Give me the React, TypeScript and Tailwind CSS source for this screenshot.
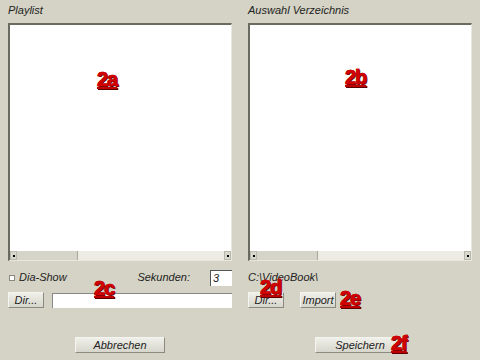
import React from "react";

const font = { fontFamily: '"Liberation Sans", Arial, sans-serif' };

function Tag({ t, className }: { t: string; className: string }) {
  return (
    <span
      className={`absolute text-[20px] leading-none font-bold underline decoration-2 underline-offset-[1px] text-[#d40000] tracking-[-1px] [-webkit-text-stroke:0.6px_#c00000] ${className}`}
      style={{ textShadow: "1px 1px 0 #5a0000", fontFamily: '"Liberation Sans", Arial, sans-serif' }}
    >
      {t}
    </span>
  );
}

function Btn({ children, className }: { children: React.ReactNode; className: string }) {
  return (
    <div
      className={`h-[16px] flex items-center justify-center border border-t-[#f4f4f0] border-l-[#f4f4f0] border-r-[#8a8a80] border-b-[#8a8a80] bg-gradient-to-b from-[#f0f0ea] to-[#d6d6cc] text-[11px] italic text-[#222] ${className}`}
    >
      {children}
    </div>
  );
}

function ListBox() {
  return (
    <div className="h-[238px] w-[224px] bg-white border-t-2 border-l-2 border-t-[#6a6a60] border-l-[#6a6a60] border-r border-b border-r-[#e8e8e0] border-b-[#e8e8e0] flex flex-col">
      <div className="flex-1" />
      <div className="h-[9px] flex items-stretch bg-[#ecece4]">
        <div className="w-[7px] bg-[#d8d8cc] border border-[#b8b8ac] flex items-center justify-center">
          <div className="w-[2px] h-[2px] bg-black" />
        </div>
        <div className="w-[61px] bg-[#d4d4c8] border-r border-[#a8a89c]" />
        <div className="flex-1" />
        <div className="w-[7px] bg-[#d8d8cc] border border-[#b8b8ac] flex items-center justify-center">
          <div className="w-[2px] h-[2px] bg-black" />
        </div>
      </div>
    </div>
  );
}

export default function App() {
  return (
    <div className="relative w-[480px] h-[360px] bg-[#d4d3c5] overflow-hidden" style={font}>
      <div className="flex gap-[16px] px-[8px] pt-[3px]">
        <div className="flex flex-col w-[224px]">
          <div className="h-[20px] text-[11px] italic text-[#222] leading-[14px]">Playlist</div>
          <ListBox />
          <div className="flex items-center h-[31px] pt-[2px]">
            <div className="w-[6px] h-[6px] bg-white border border-[#8a8a80] ml-[1px]" />
            <span className="ml-[4px] text-[11px] italic text-[#222]">Dia-Show</span>
            <span className="ml-auto mr-[20px] text-[11px] italic text-[#222]">Sekunden:</span>
            <div className="w-[22px] h-[16px] bg-white border-t border-l border-t-[#555] border-l-[#555] text-[11px] italic text-[#222] pl-[2px] leading-[15px]">
              3
            </div>
          </div>
          <div className="flex items-center">
            <Btn className="w-[36px]">Dir...</Btn>
            <div className="ml-[8px] flex-1 h-[15px] bg-white border-t border-l border-t-[#888] border-l-[#888]" />
          </div>
        </div>
        <div className="flex flex-col w-[224px]">
          <div className="h-[20px] text-[11px] italic text-[#222] leading-[14px]">Auswahl Verzeichnis</div>
          <ListBox />
          <div className="flex items-center h-[31px] pt-[2px]">
            <span className="text-[11px] italic text-[#222]">C:\VideoBook\</span>
          </div>
          <div className="flex items-center">
            <Btn className="w-[36px]">Dir...</Btn>
            <Btn className="w-[36px] ml-[16px]">Import</Btn>
          </div>
        </div>
      </div>
      <div className="flex mt-[29px]">
        <Btn className="w-[90px] ml-[75px]">Abbrechen</Btn>
        <Btn className="w-[90px] ml-[150px]">Speichern</Btn>
      </div>
      <Tag t="2a" className="left-[97px] top-[69px]" />
      <Tag t="2b" className="left-[345px] top-[67px]" />
      <Tag t="2c" className="left-[94px] top-[278px]" />
      <Tag t="2d" className="left-[260px] top-[277px]" />
      <Tag t="2e" className="left-[340px] top-[288px]" />
      <Tag t="2f" className="left-[391px] top-[333px]" />
    </div>
  );
}
